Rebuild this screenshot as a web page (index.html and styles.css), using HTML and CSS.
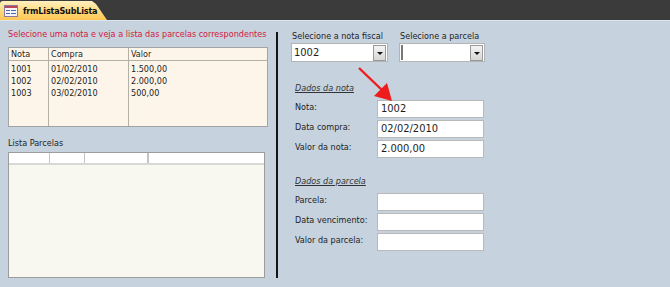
FILE: index.html
```html
<!DOCTYPE html>
<html lang="pt">
<head>
  <meta charset="UTF-8">
  <title>frmListaSubLista</title>
  <link rel="stylesheet" href="styles.css">
</head>
<body>
  <div class="tabbar">
    <div class="tab">
      <svg class="tab-icon" width="14" height="12" viewBox="0 0 14 12">
        <rect x="0.5" y="0.5" width="13" height="11" fill="#f4f4f8" stroke="#8a7aa0"/>
        <rect x="1" y="1" width="12" height="2" fill="#b8475d"/>
        <rect x="2" y="5" width="4" height="1" fill="#4a6aa8"/>
        <rect x="7" y="5" width="5" height="1" fill="#4a6aa8"/>
        <rect x="2" y="8" width="4" height="1" fill="#4a6aa8"/>
        <rect x="7" y="8" width="5" height="1" fill="#4a6aa8"/>
      </svg>
      <span>frmListaSubLista</span>
    </div>
  </div>

  <div class="form">
    <div class="left">
      <div class="hint">Selecione uma nota e veja a lista das parcelas correspondentes</div>
      <div class="listbox">
        <div class="col c1">
          <div class="head">Nota</div>
          <div>1001</div><div>1002</div><div>1003</div>
        </div>
        <div class="col c2">
          <div class="head">Compra</div>
          <div>01/02/2010</div><div>02/02/2010</div><div>03/02/2010</div>
        </div>
        <div class="col c3">
          <div class="head">Valor</div>
          <div>1.500,00</div><div>2.000,00</div><div>500,00</div>
        </div>
      </div>

      <div class="caption">Lista Parcelas</div>
      <div class="subform">
        <div class="sub-head">
          <span class="sh1"></span><span class="sh2"></span><span class="sh3"></span><span class="sh4"></span>
        </div>
      </div>
    </div>

    <div class="divider"></div>

    <div class="right">
      <div class="combos">
        <div class="combo-group g-nota">
          <div class="lbl">Selecione a nota fiscal</div>
          <div class="combo">
            <span class="combo-text">1002</span>
            <span class="combo-btn"></span>
          </div>
        </div>
        <div class="combo-group g-parcela">
          <div class="lbl">Selecione a parcela</div>
          <div class="combo">
            <span class="combo-text caret"></span>
            <span class="combo-btn"></span>
          </div>
        </div>
      </div>

      <div class="section sec-nota">
        <div class="sec-title">Dados da nota</div>
        <div class="field"><span class="flabel">Nota:</span><span class="fbox">1002</span></div>
        <div class="field"><span class="flabel">Data compra:</span><span class="fbox">02/02/2010</span></div>
        <div class="field"><span class="flabel">Valor da nota:</span><span class="fbox">2.000,00</span></div>
      </div>

      <div class="section sec-parcela">
        <div class="sec-title">Dados da parcela</div>
        <div class="field"><span class="flabel">Parcela:</span><span class="fbox"></span></div>
        <div class="field"><span class="flabel">Data vencimento:</span><span class="fbox"></span></div>
        <div class="field"><span class="flabel">Valor da parcela:</span><span class="fbox"></span></div>
      </div>

      <!-- red arrow pointing at the Nota box -->
      <svg class="arrow" width="40" height="40" viewBox="0 0 40 40">
        <line x1="2" y1="1" x2="26" y2="24" stroke="#ee1c1c" stroke-width="2.4"/>
        <polygon points="35,34 17,29 30,16" fill="#ee1c1c"/>
      </svg>
    </div>
  </div>
</body>
</html>
```

FILE: styles.css
```css
body {
  margin: 0;
  width: 670px;
  height: 287px;
  overflow: hidden;
  font-family: "DejaVu Sans Condensed", "DejaVu Sans", sans-serif;
  font-size: 9px;
  color: #1e1e1e;
  background-color: #c6d2de;
}

.tabbar {
  height: 20px;
  background-color: #3b3b3b;
  display: flex;
  align-items: flex-end;
}

.tab {
  height: 19px;
  width: 107px;
  display: flex;
  align-items: center;
  gap: 5px;
  padding-left: 4px;
  box-sizing: border-box;
  background: linear-gradient(#fff0c0, #ffd97a 55%, #ffc653);
  clip-path: polygon(0 0, 92px 0, 96px 3px, 107px 19px, 0 19px);
  border-top-left-radius: 3px;
}

.tab span {
  font-weight: bold;
  font-size: 9px;
  letter-spacing: -0.2px;
  color: #111;
  white-space: nowrap;
}

.tab-icon {
  display: block;
}

.form {
  position: relative;
  display: flex;
  height: 267px;
  border-top: 1px solid #dfe5ec;
  box-sizing: border-box;
}

/* left column */
.left {
  width: 268px;
  padding-left: 8px;
  padding-top: 7px;
}

.hint {
  color: #d2183c;
  height: 13px;
  line-height: 13px;
  white-space: nowrap;
}

.listbox {
  margin-top: 6px;
  height: 80px;
  width: 260px;
  box-sizing: border-box;
  border: 1px solid #a3a3a3;
  background-color: #fdf5e9;
  display: flex;
  line-height: 12px;
}

.col {
  border-right: 1px solid #b5b0a6;
  padding-left: 2px;
  box-sizing: border-box;
}

.col .head {
  border-bottom: 1px solid #b5b0a6;
  margin-left: -2px;
  padding-left: 2px;
  margin-bottom: 2px;
}

.c1 { width: 40px; }
.c2 { width: 80px; }
.c3 { flex: 1; border-right: none; }

.caption {
  margin-top: 10px;
  height: 13px;
  line-height: 13px;
}

.subform {
  margin-top: 2px;
  width: 257px;
  height: 126px;
  box-sizing: border-box;
  border: 1px solid #9c9c9c;
  background-color: #f8f8f0;
}

.sub-head {
  display: flex;
  height: 10px;
  background-color: #fff;
  border-bottom: 2px solid #d8d8d4;
}

.sub-head span {
  border-right: 1px solid #c4c4c4;
}

.sh1 { width: 40px; }
.sh2 { width: 34px; }
.sh3 { width: 62px; border-right-width: 2px !important; }
.sh4 { flex: 1; border-right: none !important; }

.divider {
  margin-top: 11px;
  width: 2px;
  height: 246px;
  background-color: #141414;
}

/* right column */
.right {
  padding-left: 13px;
  padding-top: 9px;
}

.combos {
  display: flex;
  gap: 11px;
}

.g-nota { width: 97px; }
.g-parcela { width: 86px; }

.lbl {
  height: 13px;
  line-height: 13px;
  padding-left: 1px;
  white-space: nowrap;
}

.combo {
  height: 19px;
  box-sizing: border-box;
  border: 1px solid #b4b4b4;
  background-color: #fff;
  display: flex;
  align-items: center;
}

.combo-text {
  flex: 1;
  padding-left: 2px;
  font-size: 11px;
}

.caret {
  height: 15px;
  border-left: 2px solid #777;
  margin-left: 1px;
  padding-left: 0;
}

.combo-btn {
  width: 13px;
  height: 16px;
  margin-right: 1px;
  box-sizing: border-box;
  border: 1px solid #9a9a9a;
  background: linear-gradient(#f4f4f4, #d6d6d6);
  position: relative;
}

.combo-btn::after {
  content: "";
  position: absolute;
  left: 3px;
  top: 6px;
  border-left: 3px solid transparent;
  border-right: 3px solid transparent;
  border-top: 3px solid #111;
}

.section {
  padding-left: 4px;
}

.sec-nota { margin-top: 19px; }
.sec-parcela { margin-top: 16px; }

.sec-title {
  font-style: italic;
  text-decoration: underline;
  color: #333;
  height: 14px;
  line-height: 14px;
  margin-bottom: 5px;
}

.field {
  display: flex;
  align-items: flex-start;
  margin-bottom: 2px;
}

.flabel {
  width: 82px;
  line-height: 14px;
}

.fbox {
  width: 107px;
  height: 18px;
  box-sizing: border-box;
  border: 1px solid #b9b9b9;
  background-color: #fff;
  font-size: 11px;
  line-height: 16px;
  padding-left: 3px;
}

.arrow {
  position: absolute;
  left: 357px;
  top: 46px;
}
```
